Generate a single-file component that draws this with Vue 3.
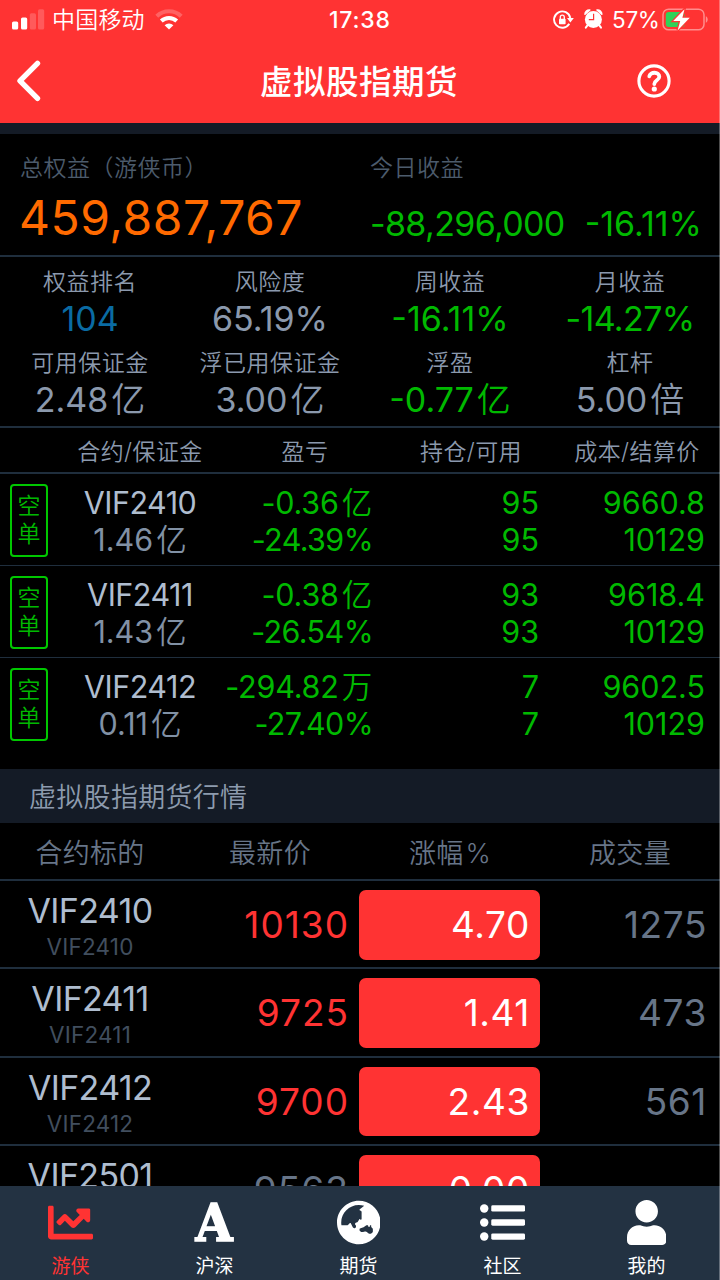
<script setup>
const stats = [
  { label: '权益排名', value: '104', tone: 'blue' },
  { label: '风险度', value: '65.19%', tone: 'plain' },
  { label: '周收益', value: '-16.11%', tone: 'green' },
  { label: '月收益', value: '-14.27%', tone: 'green', tight: true },
  { label: '可用保证金', value: '2.48', unit: '亿', tone: 'plain' },
  { label: '浮已用保证金', value: '3.00', unit: '亿', tone: 'plain' },
  { label: '浮盈', value: '-0.77', unit: '亿', tone: 'green' },
  { label: '杠杆', value: '5.00', unit: '倍', tone: 'plain' },
]
const positions = [
  { code: 'VIF2410', margin: '1.46', pl: '-0.36', unit: '亿', pct: '-24.39%', qty: '95', cost: '9660.8', settle: '10129' },
  { code: 'VIF2411', margin: '1.43', pl: '-0.38', unit: '亿', pct: '-26.54%', qty: '93', cost: '9618.4', settle: '10129' },
  { code: 'VIF2412', margin: '0.11', pl: '-294.82', unit: '万', pct: '-27.40%', qty: '7', cost: '9602.5', settle: '10129' },
]
const quotes = [
  { code: 'VIF2410', sub: 'VIF2410', price: '10130', change: '4.70', volume: '1275' },
  { code: 'VIF2411', sub: 'VIF2411', price: '9725', change: '1.41', volume: '473' },
  { code: 'VIF2412', sub: 'VIF2412', price: '9700', change: '2.43', volume: '561' },
  { code: 'VIF2501', price: '9563', change: '0.00', flat: true },
]
</script>

<template>
  <div class="screen">
    <header class="top">
      <div class="status">
        <svg class="signal" width="33" height="21" viewBox="0 0 33 21">
          <rect x="0" y="12.5" width="6.2" height="8" rx="1.6" fill="#fff" />
          <rect x="9" y="8.5" width="6.2" height="12" rx="1.6" fill="#fff" />
          <rect x="17.8" y="4.2" width="6.2" height="16.3" rx="1.6" fill="#ff5a5b" />
          <rect x="26" y="0.2" width="6.2" height="20.3" rx="1.6" fill="#ff5a5b" />
        </svg>
        <span class="carrier">中国移动</span>
        <svg class="wifi" width="28" height="21" viewBox="0 0 28 21" fill="none">
          <path d="M1.8 7.2A17.5 17.5 0 0 1 26.2 7.2" stroke="#ff6263" stroke-width="4.2" />
          <path d="M6.3 12A11.2 11.2 0 0 1 21.7 12" stroke="#fff" stroke-width="4" />
          <path d="M14 20.6L9.6 16.2A6.3 6.3 0 0 1 18.4 16.2Z" fill="#fff" />
        </svg>
        <span class="clock">17:38</span>
        <svg class="lock" width="21" height="20" viewBox="0 0 21 20" fill="none">
          <path d="M16.3 13.8A8.2 8.2 0 1 1 17.3 8" stroke="#fff" stroke-width="1.9" />
          <path d="M14 8H20.8L17.4 12.4Z" fill="#fff" />
          <rect x="6" y="8.8" width="6.6" height="5.4" rx="0.8" fill="#fff" />
          <path d="M7.3 9V7.2A2 2 0 0 1 11.3 7.2V9" stroke="#fff" stroke-width="1.3" />
        </svg>
        <svg class="alarm" width="19" height="20" viewBox="0 0 19 20">
          <circle cx="9.4" cy="10.4" r="8.5" fill="#fff" />
          <path d="M1 5.2A4.2 4.2 0 0 1 5.8 1ZM17.8 5.2A4.2 4.2 0 0 0 13 1Z" fill="#fff" stroke="#fff" stroke-width="1.6" stroke-linejoin="round" />
          <path d="M3.4 16.4L1.8 18.6M15.4 16.4L17 18.6" stroke="#fff" stroke-width="2" stroke-linecap="round" />
          <path d="M9.6 4.8V10.6H4.8" stroke="#ff3434" stroke-width="1.2" fill="none" />
        </svg>
        <span class="pct">57%</span>
        <svg class="battery" width="46" height="24" viewBox="0 0 46 24">
          <rect x="1" y="1.2" width="41" height="20.6" rx="5.6" fill="none" stroke="#ff8d8d" stroke-width="1.5" />
          <path d="M43.8 8.3C46.3 9.3 46.3 13.7 43.8 14.7Z" fill="#ff8d8d" />
          <rect x="3.8" y="4" width="19" height="15" rx="3" fill="#30d158" />
          <path d="M22.5 1.2L11.2 13.1H18.2L15.6 22.4L27.8 9.8H20.4Z" fill="#fff" stroke="#ff3434" stroke-width="2.4" paint-order="stroke" />
        </svg>
      </div>
      <div class="nav">
        <svg class="back" width="28" height="44" viewBox="0 0 28 44" fill="none">
          <path d="M23.5 4.4L6 21.9L23.5 39.4" stroke="#fff" stroke-width="5.4" stroke-linecap="round" stroke-linejoin="round" />
        </svg>
        <h1>虚拟股指期货</h1>
        <svg class="help" width="34" height="34" viewBox="0 0 34 34" fill="none">
          <circle cx="17" cy="17" r="15.1" stroke="#fff" stroke-width="3.1" />
          <path d="M12.3 12.3C13.1 7.5 22.3 7.5 22.3 12.8C22.3 16.4 17.3 16.2 17.3 20" stroke="#fff" stroke-width="3.8" stroke-linecap="round" stroke-linejoin="round" />
          <circle cx="17.3" cy="25" r="2.6" fill="#fff" />
        </svg>
      </div>
    </header>
    <div class="strip"></div>

    <section class="summary">
      <div class="equity">
        <div class="dim">总权益（游侠币）</div>
        <div class="total">459,887,767</div>
      </div>
      <div class="today">
        <div class="dim">今日收益</div>
        <div class="gain"><span class="amt">-88,296,000</span><span class="rate">-16.11%</span></div>
      </div>
    </section>

    <section class="stats">
      <div v-for="s in stats" :key="s.label" class="stat">
        <div class="s-label">{{ s.label }}</div>
        <div class="s-value" :class="[s.tone, { tight: s.tight }]">{{ s.value }}<span v-if="s.unit" class="unit">{{ s.unit }}</span></div>
      </div>
    </section>

    <div class="pos-head">
      <span class="ph1">合约/保证金</span><span class="ph2">盈亏</span><span class="ph3">持仓/可用</span><span class="ph4">成本/结算价</span>
    </div>
    <section class="positions">
      <div v-for="p in positions" :key="p.code" class="pos">
        <div class="badge"><span>空</span><span>单</span></div>
        <div class="p-code"><div class="name">{{ p.code }}</div><div class="mid">{{ p.margin }}<span class="unit">亿</span></div></div>
        <div class="p-pl"><div class="p-amt">{{ p.pl }}<span class="unit">{{ p.unit }}</span></div><div class="p-pct">{{ p.pct }}</div></div>
        <div class="p-qty"><div>{{ p.qty }}</div><div>{{ p.qty }}</div></div>
        <div class="p-cost"><div>{{ p.cost }}</div><div>{{ p.settle }}</div></div>
      </div>
    </section>

    <h2>虚拟股指期货行情</h2>
    <div class="q-head"><span>合约标的</span><span>最新价</span><span>涨幅<i>%</i></span><span>成交量</span></div>
    <section class="quotes">
      <div v-for="q in quotes" :key="q.code" class="quote">
        <div class="q-code"><div class="q-name">{{ q.code }}</div><div v-if="q.sub" class="q-sub">{{ q.sub }}</div></div>
        <div class="q-price" :class="{ flat: q.flat }">{{ q.price }}</div>
        <div class="q-change">{{ q.change }}</div>
        <div class="q-vol">{{ q.volume }}</div>
      </div>
    </section>

    <nav class="tabs">
      <div class="tab active">
        <div class="ico"><svg width="45" height="45" viewBox="0 0 512 512" fill="currentColor"><path d="M496 384H64V80c0-8.84-7.16-16-16-16H16C7.16 64 0 71.16 0 80v336c0 17.67 14.33 32 32 32h464c8.84 0 16-7.16 16-16v-32c0-8.84-7.16-16-16-16zM464 96H345.94c-21.38 0-32.09 25.85-16.97 40.97l32.4 32.4L288 242.75l-73.37-73.37c-12.5-12.5-32.76-12.5-45.25 0l-68.69 68.69c-6.25 6.25-6.25 16.38 0 22.63l22.62 22.62c6.25 6.25 16.38 6.25 22.63 0L192 237.25l73.37 73.37c12.5 12.5 32.76 12.5 45.25 0l96-96 32.4 32.4c15.12 15.12 40.97 4.41 40.97-16.97V112c.01-8.84-7.15-16-15.99-16z" /></svg></div>
        <span>游侠</span>
      </div>
      <div class="tab">
        <div class="ico letter">A</div>
        <span>沪深</span>
      </div>
      <div class="tab">
        <div class="ico"><svg width="43.6" height="45" viewBox="0 0 496 512" fill="currentColor"><path d="M248 8C111.03 8 0 119.03 0 256s111.03 248 248 248 248-111.03 248-248S384.97 8 248 8zm-11.34 240.23c-2.89 4.82-8.1 7.77-13.72 7.77h-.31c-4.24 0-8.31 1.69-11.31 4.69l-5.66 5.66c-3.12 3.12-3.12 8.19 0 11.31l5.66 5.66c3 3 4.69 7.07 4.69 11.31V304c0 8.84-7.16 16-16 16h-6.11c-6.06 0-11.6-3.42-14.31-8.85l-22.62-45.23c-2.44-4.88-8.95-5.94-12.81-2.08l-19.47 19.46c-3 3-7.07 4.69-11.31 4.69H50.81C49.12 277.55 48 266.92 48 256c0-110.28 89.72-200 200-200 21.51 0 42.2 3.51 61.63 9.82l-50.16 38.53c-5.11 3.41-4.63 11.06.86 13.81l10.83 5.41c5.42 2.71 8.84 8.25 8.84 14.31V216c0 4.42-3.58 8-8 8h-3.06c-3.03 0-5.8-1.71-7.15-4.42-1.56-3.12-5.96-3.29-7.76-.3l-17.37 28.95zM408 358.43c0 4.24-1.69 8.31-4.69 11.31l-9.57 9.57c-3 3-7.07 4.69-11.31 4.69h-15.16c-4.24 0-8.31-1.69-11.31-4.69l-13.01-13.01a26.767 26.767 0 0 0-25.42-7.04l-21.27 5.32c-1.27.32-2.57.48-3.88.48h-10.34c-4.24 0-8.31-1.69-11.31-4.69l-11.91-11.91a8.008 8.008 0 0 1-2.34-5.66v-10.2c0-3.27 1.99-6.21 5.03-7.43l39.34-15.74c1.98-.79 3.86-1.82 5.59-3.05l23.71-16.89a7.978 7.978 0 0 1 4.64-1.48h12.09c3.23 0 6.15 1.94 7.39 4.93l5.35 12.85a4 4 0 0 0 3.69 2.46h3.8c1.78 0 3.35-1.18 3.84-2.88l4.2-14.47c.5-1.71 2.06-2.88 3.84-2.88h6.06c2.21 0 4 1.79 4 4v12.93c0 2.12.84 4.16 2.34 5.66l11.91 11.91c3 3 4.69 7.07 4.69 11.31v24.6z" /></svg></div>
        <span>期货</span>
      </div>
      <div class="tab">
        <div class="ico"><svg width="45" height="45" viewBox="0 0 512 512" fill="currentColor"><g v-for="y in [96, 256, 416]" :key="y"><circle cx="48" :cy="y" r="48" /><rect x="128" :y="y - 36" width="384" height="72" rx="16" /></g></svg></div>
        <span>社区</span>
      </div>
      <div class="tab">
        <div class="ico"><svg width="39.4" height="45" viewBox="0 0 448 512" fill="currentColor"><path d="M224 256c70.7 0 128-57.3 128-128S294.7 0 224 0 96 57.3 96 128s57.3 128 128 128zm89.6 32h-16.7c-22.2 10.2-46.9 16-72.9 16s-50.6-5.8-72.9-16h-16.7C60.2 288 0 348.2 0 422.4V464c0 26.5 21.5 48 48 48h352c26.5 0 48-21.5 48-48v-41.6c0-74.2-60.2-134.4-134.4-134.4z" /></svg></div>
        <span>我的</span>
      </div>
    </nav>
    <div class="edge"></div>
  </div>
</template>

<style>
body { background: #000; }
</style>

<style scoped>
* { box-sizing: border-box; }
.screen { position: relative; display: flex; flex-direction: column; width: 720px; height: 1280px; overflow: hidden; background: #000; color: #8b99ad; font-family: Inter, "Noto Sans CJK SC", sans-serif; font-weight: 350; white-space: nowrap; }
.top { flex: none; height: 123px; background: #ff3333; color: #fff; }
.status { display: flex; height: 40px; align-items: flex-start; }
.status svg { flex: none; }
.signal { margin: 8.5px 0 0 12px; }
.carrier { width: 96px; margin-left: 7px; line-height: 41px; font-size: 23px; letter-spacing: .2px; }
.wifi { margin: 9px 0 0 7px; }
.clock { width: 80px; margin-left: 146px; line-height: 40px; font-size: 23px; font-weight: 500; letter-spacing: .8px; }
.lock { margin: 10px 0 0 144px; }
.alarm { margin: 8.5px 0 0 10px; }
.pct { width: 47px; margin-left: 9px; line-height: 40px; font-size: 22.5px; font-weight: 400; letter-spacing: -.3px; }
.battery { margin: 7.5px 0 0 3px; }
.nav { display: flex; align-items: center; height: 82px; padding: 0 49px 0 14px; justify-content: space-between; }
h1 { margin: 3px 0 0 39px; font-size: 32.5px; font-weight: 500; letter-spacing: .5px; line-height: 40px; }
.strip { flex: none; height: 11px; background: #141b26; }
.summary { flex: none; display: flex; height: 123px; border-bottom: 2px solid #1f2e3d; padding: 17px 0 0 20px; }
.equity { width: 350px; }
.dim { line-height: 35px; font-size: 23px; letter-spacing: .5px; color: #4c5b6c; }
.total { margin-left: -1px; line-height: 64px; font-size: 48px; font-weight: 400; letter-spacing: .5px; color: #ff6a00; }
.gain { display: flex; line-height: 75px; font-size: 34px; font-weight: 400; color: #00b900; }
.amt { letter-spacing: -.65px; }
.rate { margin-left: 20px; }
.stats { flex: none; display: grid; grid-template-columns: repeat(4, 180px); grid-auto-rows: 80.5px; height: 171px; padding-top: 8px; border-bottom: 2px solid #1f2e3d; text-align: center; }
.s-label { line-height: 34px; font-size: 23px; letter-spacing: .5px; }
.s-value { line-height: 40px; font-size: 34px; font-weight: 400; }
.tight { letter-spacing: -.6px; }
.blue { color: #0a6ba3; }
.green { color: #00b900; }
.unit { margin-left: 3px; font-weight: 350; }
.pos-head { flex: none; display: flex; height: 46px; border-bottom: 2px solid #1f2e3d; line-height: 49px; font-size: 23px; letter-spacing: .4px; text-align: center; }
.ph1 { width: 280px; }
.ph2 { width: 50px; }
.ph3 { width: 282px; }
.ph4 { width: 50px; display: flex; justify-content: center; }
.positions { flex: none; height: 295px; }
.pos { display: flex; height: 92px; padding: 10px 0 0 10px; border-bottom: 1px solid #1f2e3d; font-size: 30.5px; font-weight: 400; line-height: 37px; color: #00b900; text-align: right; }
.pos:last-child { border-bottom: 0; }
.badge { display: flex; flex-direction: column; width: 38px; height: 73px; padding-top: 7px; border: 2px solid #00c800; border-radius: 4px; font-size: 23px; font-weight: 350; line-height: 27.5px; text-align: center; }
.p-code { width: 184px; text-align: center; color: #8191a5; }
.name { color: #afbdcf; letter-spacing: -.5px; }
.p-pl { width: 161px; margin-left: -20px; }
.p-amt { letter-spacing: -.2px; margin-right: 1px; }
.p-pct { letter-spacing: -.6px; }
.p-qty { width: 166px; }
.p-cost { width: 166px; }
h2 { flex: none; margin: 0; height: 54px; padding-left: 29px; background: #141b26; font-size: 27px; font-weight: 350; line-height: 57px; letter-spacing: .3px; color: #8d9bae; }
.q-head { flex: none; display: grid; grid-template-columns: repeat(4, 180px); height: 58px; border-bottom: 2px solid #1f2e3d; font-size: 27px; line-height: 62px; letter-spacing: .3px; text-align: center; color: #677588; }
.q-head i { font-style: normal; margin-left: 2px; }
.quotes { flex: 1; min-height: 0; overflow: hidden; }
.quote { display: flex; height: 88.33px; border-bottom: 2px solid #1f2e3d; align-items: flex-start; line-height: 88px; font-size: 37px; font-weight: 400; letter-spacing: .6px; text-align: right; }
.q-code { width: 180px; text-align: center; }
.q-name { margin-top: 10px; line-height: 40px; font-size: 34px; letter-spacing: -.65px; color: #afbdcf; }
.q-sub { line-height: 31px; font-size: 22.5px; letter-spacing: .2px; color: #414e5e; }
.q-price { width: 169px; color: #ff3333; letter-spacing: 1px; }
.flat { color: #677588; }
.q-change { width: 181px; height: 69.5px; margin: 9px 0 0 10px; padding-right: 10px; border-radius: 7px; background: #ff3333; color: #fff; line-height: 70px; }
.q-vol { width: 167px; color: #677588; }
.tabs { flex: none; display: grid; grid-template-columns: repeat(5, 144px); height: 94px; background: #233242; color: #fff; }
.tab { display: flex; flex-direction: column; align-items: center; width: 141px; padding-top: 14px; font-size: 19px; line-height: 26px; font-weight: 400; }
.ico { display: flex; align-items: center; justify-content: center; height: 45px; margin-bottom: 9px; }
.active { color: #ff3333; }
.letter { font: bold 52px/45px "DejaVu Serif", serif; transform: scaleX(.92); -webkit-text-stroke: 1.6px #fff; }
.edge { position: absolute; top: 0; right: 0; width: 1px; height: 1280px; background: rgba(255, 255, 255, .3); }
</style>
